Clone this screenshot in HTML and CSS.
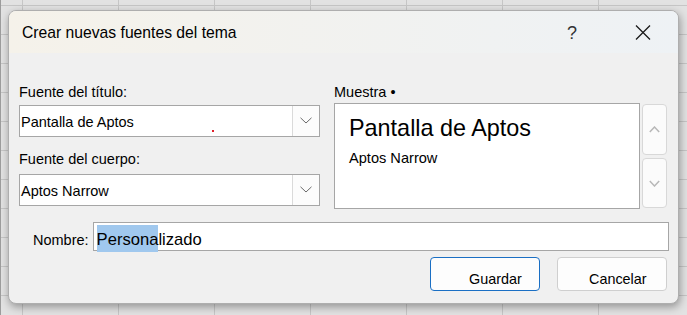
FILE: index.html
```html
<!DOCTYPE html>
<html lang="es">
<head>
    <meta charset="UTF-8">
    <meta name="viewport" content="width=device-width, initial-scale=1.0">
    <title>Crear nuevas fuentes del tema</title>
    <link rel="stylesheet" href="styles.css">
</head>
<body>
    <div class="dialog">
        <div class="titlebar">
            <span class="title">Crear nuevas fuentes del tema</span>
            <span class="help">?</span>
            <svg class="close" width="16" height="15" viewBox="0 0 16 15">
                <path d="M1 0.5 L15 14.5 M15 0.5 L1 14.5" stroke="#1b1b1b" stroke-width="1.3" fill="none"/>
            </svg>
        </div>

        <div class="content">
            <div class="columns">
                <div class="left-col">
                    <div class="field-label">Fuente del título:</div>
                    <div class="select">
                        <span class="select-text">Pantalla de Aptos</span>
                        <span class="red-dot"></span>
                        <span class="select-btn">
                            <svg width="12" height="7" viewBox="0 0 12 7"><path d="M0.5 0.8 L6 6 L11.5 0.8" stroke="#6a6a6a" stroke-width="1" fill="none"/></svg>
                        </span>
                    </div>
                    <div class="field-label second">Fuente del cuerpo:</div>
                    <div class="select">
                        <span class="select-text">Aptos Narrow</span>
                        <span class="select-btn">
                            <svg width="12" height="7" viewBox="0 0 12 7"><path d="M0.5 0.8 L6 6 L11.5 0.8" stroke="#6a6a6a" stroke-width="1" fill="none"/></svg>
                        </span>
                    </div>
                </div>

                <div class="right-col">
                    <div class="field-label sample-label">Muestra •</div>
                    <div class="preview-row">
                        <div class="sample">
                            <div class="sample-title">Pantalla de Aptos</div>
                            <div class="sample-body">Aptos Narrow</div>
                        </div>
                        <div class="spin">
                            <div class="spin-btn up">
                                <svg width="11" height="7" viewBox="0 0 11 7"><path d="M0.8 6 L5.5 1 L10.2 6" stroke="#b8b8b8" stroke-width="1.5" fill="none"/></svg>
                            </div>
                            <div class="spin-btn down">
                                <svg width="11" height="7" viewBox="0 0 11 7"><path d="M0.8 1 L5.5 6 L10.2 1" stroke="#b8b8b8" stroke-width="1.5" fill="none"/></svg>
                            </div>
                        </div>
                    </div>
                </div>
            </div>

            <div class="name-row">
                <span class="name-label">Nombre:</span>
                <div class="name-input"><span class="selected">Persona</span>lizado</div>
            </div>

            <div class="actions">
                <button class="btn primary">Guardar</button>
                <button class="btn cancel">Cancelar</button>
            </div>
        </div>
    </div>
</body>
</html>
```

FILE: styles.css
```css
* {
    box-sizing: border-box;
}
body {
    margin: 0;
    width: 687px;
    height: 315px;
    overflow: hidden;
    padding: 10px 0 0 7px;
    border-left: 1px solid #9c9c9c;
    font-family: 'Liberation Sans', Arial, sans-serif;
    color: #000;
    background-color: #e2e2e2;
    background-image:
        linear-gradient(to right, #c6c6c6 1px, transparent 1px),
        linear-gradient(to bottom, #c6c6c6 1px, transparent 1px);
    background-size: 96px 29px;
    background-position: 22px 5px;
}
.dialog {
    width: 671px;
    height: 294px;
    border: 1px solid #aeaeae;
    border-radius: 8px;
    overflow: hidden;
    background: #f0f0f0;
    box-shadow: 1px 3px 8px rgba(0, 0, 0, 0.35);
}
.titlebar {
    height: 42px;
    display: flex;
    align-items: center;
    padding-left: 13px;
    background: linear-gradient(to right, #f5f2ea, #eef2f5);
}
.title {
    font-size: 15.7px;
    padding-top: 2px;
}
.help {
    margin-left: auto;
    margin-right: 58px;
    font-size: 18px;
    color: #333;
    padding-top: 2px;
}
.close {
    margin-right: 27px;
    margin-top: 1px;
}
.content {
    padding: 30px 11px 0 10px;
}
.columns {
    display: flex;
    gap: 14px;
}
.left-col {
    width: 301px;
}
.field-label {
    font-size: 14.5px;
    line-height: 18px;
    margin-bottom: 4px;
}
.field-label.second {
    margin-top: 13px;
    margin-bottom: 6px;
}
.field-label.sample-label {
    margin-bottom: 2px;
}
.select {
    position: relative;
    height: 32px;
    display: flex;
    background: white;
    border: 1px solid #a6a6a6;
}
.select-text {
    flex: 1;
    padding-left: 1px;
    font-size: 14.5px;
    line-height: 30px;
    padding-top: 1px;
}
.select-btn {
    width: 27px;
    display: flex;
    align-items: center;
    justify-content: center;
    background: #fcfcfc;
    border-left: 1px solid #dadada;
    padding-bottom: 1px;
}
.red-dot {
    position: absolute;
    left: 192px;
    top: 24px;
    width: 2px;
    height: 2px;
    background: #e0202a;
}
.right-col {
    flex: 1;
}
.preview-row {
    display: flex;
    gap: 2px;
}
.sample {
    flex: 1;
    height: 106px;
    background: white;
    border: 1px solid #a6a6a6;
    padding: 10px 0 0 14px;
}
.sample-title {
    font-size: 23.4px;
    line-height: 28px;
}
.sample-body {
    font-size: 14.6px;
    line-height: 17px;
    margin-top: 8px;
}
.spin {
    width: 25px;
    display: flex;
    flex-direction: column;
    gap: 3px;
    padding-top: 1px;
}
.spin-btn {
    display: flex;
    align-items: center;
    justify-content: center;
    background: #fbfbfb;
    border: 1px solid #d8d8d8;
    border-radius: 4px;
}
.spin-btn.up {
    height: 51px;
}
.spin-btn.down {
    height: 50px;
}
.name-row {
    display: flex;
    align-items: baseline;
    margin-top: 13px;
    padding-left: 14px;
    margin-right: -2px;
}
.name-label {
    font-size: 14.5px;
    margin-right: 4px;
}
.name-input {
    flex: 1;
    height: 29px;
    background: white;
    border: 1px solid #a6a6a6;
    padding: 7px 0 0 3px;
    font-size: 16.6px;
    line-height: 20px;
}
.selected {
    background: #a0c8ee;
    padding: 5px 0 3px;
}
.actions {
    display: flex;
    justify-content: flex-end;
    gap: 17px;
    margin-top: 6px;
}
.btn {
    width: 110px;
    height: 34px;
    border-radius: 4px;
    background: #fdfdfd;
    font-family: 'Liberation Sans', Arial, sans-serif;
    font-size: 14.4px;
    line-height: 20px;
    color: #000;
    text-align: left;
    padding: 9px 0 0 0;
}
.btn.primary {
    border: 1px solid #1a6fc4;
    padding-left: 38px;
}
.btn.cancel {
    border: 1px solid #cfcfcf;
    padding-left: 31px;
}
```
